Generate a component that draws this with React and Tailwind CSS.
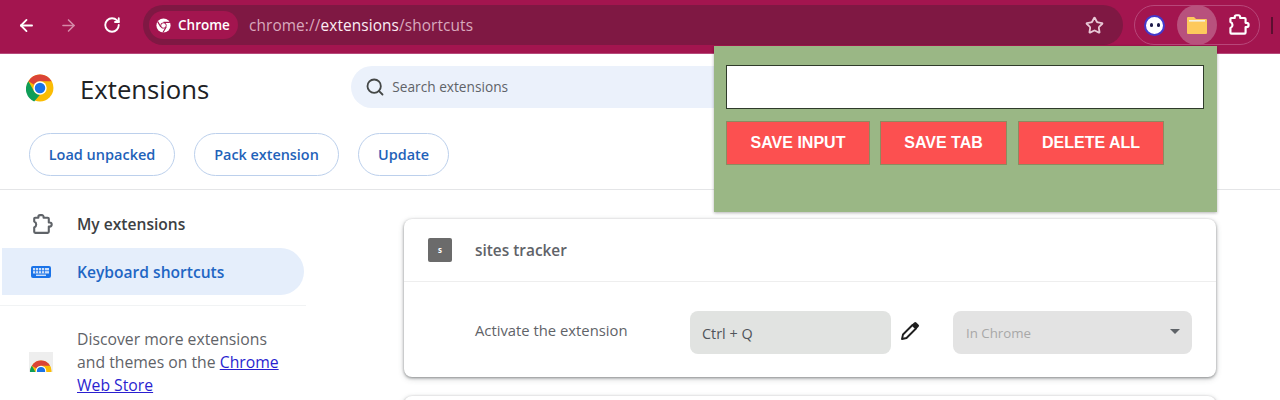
import React from "react";
import { ArrowLeft, ArrowRight, RotateCw, Star, Search } from "lucide-react";

const PuzzlePath = "M5.8 5.5 H9 V4.6 a1.6 1.6 0 0 1 1.6-1.6 h1.8 a1.6 1.6 0 0 1 1.6 1.6 V5.5 H18 a1 1 0 0 1 1 1 V10 h0.8 a2 2 0 0 1 0 4 H19 V19 a1 1 0 0 1-1 1 H6 a1 1 0 0 1-1-1 V14.8 a3 3 0 0 0 0-5.6 V6.3 a0.8 0.8 0 0 1 0.8-0.8 Z";

function Puzzle({ className, sw = 2 }) {
  return (
    <svg viewBox="0 0 24 24" className={className} fill="none" stroke="currentColor" strokeWidth={sw} strokeLinejoin="round">
      <path d={PuzzlePath} />
    </svg>
  );
}

function ChromeLogo({ className }) {
  return (
    <svg viewBox="0 0 48 48" className={className}>
      <circle cx="24" cy="24" r="23" fill="#fbbc04" />
      <path d="M24 1a23 23 0 0 1 19.9 11.5H24a11.5 11.5 0 0 0-10 5.8L4.1 12.5A23 23 0 0 1 24 1z" fill="#db4437" />
      <path d="M4.1 12.5 14 29.8a11.5 11.5 0 0 0 10 5.7L14 47A23 23 0 0 1 4.1 12.5z" fill="#0f9d58" />
      <circle cx="24" cy="24" r="11.5" fill="#fff" />
      <circle cx="24" cy="24" r="9" fill="#1a73e8" />
    </svg>
  );
}

function ChromeMono({ className }) {
  return (
    <svg viewBox="0 0 24 24" className={className} fill="none">
      <circle cx="12" cy="12" r="10" fill="#fff" />
      <circle cx="12" cy="12" r="4.4" fill="#a3154f" />
      <path d="M12 7.6h9M8.2 14.2 3.8 6.5M15.8 14.2 11.2 22" stroke="#a3154f" strokeWidth="1.6" />
      <circle cx="12" cy="12" r="3.2" fill="#fff" />
    </svg>
  );
}

function Toolbar() {
  return (
    <div className="h-[54px] shrink-0 bg-[#a3154f] border-b border-[#b5497a] flex items-center pb-[3px] relative">
      <div className="w-[143px] shrink-0 flex items-center text-white">
        <ArrowLeft className="w-[19px] h-[19px] ml-[17px]" strokeWidth={2.3} />
        <ArrowRight className="w-[19px] h-[19px] ml-[23px] text-[#d58aa8]" strokeWidth={2} />
        <RotateCw className="w-[18px] h-[18px] ml-[25px]" strokeWidth={2.5} />
      </div>
      <div className="w-[980px] shrink-0 h-[40px] rounded-full bg-[#7f1843] flex items-center pl-[6px]">
        <div className="h-[28px] w-[89px] rounded-full bg-[#a3154f] flex items-center pl-[6px] gap-[6px] text-white text-[13.5px] font-semibold">
          <ChromeMono className="w-[17px] h-[17px]" />
          <span>Chrome</span>
        </div>
        <div className="ml-[11px] pt-[1px] text-[15.4px] text-[#d9a9bd] tracking-[0.1px]">
          chrome://<span className="text-[#fbeef3]">extensions</span>/shortcuts
        </div>
        <Star className="w-[19px] h-[19px] ml-auto mr-[19px] text-[#e8c8d6]" strokeWidth={2.3} />
      </div>
      <div className="ml-[11px] w-[126px] h-[40px] rounded-full border border-[#b8477a] flex items-center relative">
        <div className="ml-[9px] w-[21px] h-[21px] rounded-full bg-white border-[2.5px] border-[#4338ca] flex items-center justify-center gap-[4px]">
          <span className="w-[3px] h-[4px] rounded-full bg-[#1e1b4b]"></span>
          <span className="w-[3px] h-[4px] rounded-full bg-[#1e1b4b]"></span>
        </div>
        <div className="ml-[12px] w-[40px] h-[40px] rounded-full bg-[#b8517d] flex items-center justify-center">
          <svg viewBox="0 0 20 18" className="w-[20px] h-[18px]">
            <path d="M0 2a1 1 0 0 1 1-1h6l2 2h10a1 1 0 0 1 1 1v13a1 1 0 0 1-1 1H1a1 1 0 0 1-1-1z" fill="#fdc95c" />
            <path d="M2 4h16v1.6H2z" fill="#f3f1e4" />
          </svg>
        </div>
        <Puzzle className="w-[26px] h-[26px] ml-[8px] text-white" />
      </div>
      <div className="ml-[11px] w-[2px] h-[17px] bg-[#5c0f30]"></div>
    </div>
  );
}

function Popup() {
  return (
    <div className="absolute left-[714px] top-[46px] w-[503px] h-[166px] bg-[#9ab785] shadow-[0_1px_3px_rgba(0,0,0,0.3)] pt-[19px] pl-[12px] pr-[13px] font-['Liberation_Sans',sans-serif]">
      <div className="h-[44px] w-full bg-white border border-[#2f3b2a]"></div>
      <div className="flex mt-[12px]">
        <div className="w-[144px] h-[44px] bg-[#fc5050] border border-[#8d8a60] flex items-center justify-center text-white font-bold text-[16px]">SAVE INPUT</div>
        <div className="w-[127px] h-[44px] ml-[10px] bg-[#fc5050] border border-[#8d8a60] flex items-center justify-center text-white font-bold text-[16px]">SAVE TAB</div>
        <div className="w-[146px] h-[44px] ml-[11px] bg-[#fc5050] border border-[#8d8a60] flex items-center justify-center text-white font-bold text-[16px]">DELETE ALL</div>
      </div>
    </div>
  );
}

function Sidebar() {
  return (
    <div className="w-[306px] shrink-0 pt-[10px] text-[15.6px]">
      <div className="h-[48px] flex items-center pl-[29px] font-semibold text-[#3c4043]">
        <Puzzle className="w-[25px] h-[25px] text-[#5f6368]" />
        <span className="ml-[23px] pt-[2px]">My extensions</span>
      </div>
      <div className="h-[47px] w-[302px] ml-[2px] rounded-r-full bg-[#e5eefb] flex items-center pl-[29px] font-semibold text-[#1f66c4]">
        <svg viewBox="0 0 20 12" className="w-[20px] h-[12px]">
          <rect x="0" y="0" width="20" height="12" rx="2" fill="#1a73e8" />
          <rect x="2" y="2" width="16" height="5.5" fill="#cfe0f8" />
          <path d="M4.5 2v5.5M7.5 2v5.5M10.5 2v5.5M13.5 2v5.5M2 4.7h16" stroke="#1a73e8" strokeWidth="0.8" />
          <rect x="5" y="8.6" width="10" height="1.4" fill="#cfe0f8" />
        </svg>
        <span className="ml-[26px] pt-[2px]">Keyboard shortcuts</span>
      </div>
      <div className="h-px bg-[#f1f3f4] mt-[10px]"></div>
      <div className="flex mt-[22px] pl-[29px]">
        <div className="relative w-[24px] h-[20px] mt-[24px] overflow-hidden bg-[#eeeeee]">
          <ChromeLogo className="absolute left-[1px] top-[8px] w-[22px] h-[22px]" />
        </div>
        <div className="ml-[24px] text-[15.75px] text-[#5f6368] leading-[23px]">
          Discover more extensions<br />and themes on the <span className="text-[#2a1fd0] underline">Chrome</span><br />
          <span className="text-[#2a1fd0] underline">Web Store</span>
        </div>
      </div>
    </div>
  );
}

function Card({ children }) {
  return (
    <div className="w-[812px] h-[158px] rounded-[8px] bg-white shadow-[0_1px_3px_rgba(60,64,67,0.55),0_2px_6px_rgba(60,64,67,0.2)] shrink-0">
      {children}
    </div>
  );
}

export default function App() {
  return (
    <div className="relative w-[1280px] h-[400px] overflow-hidden bg-white flex flex-col font-['Open_Sans','Noto_Sans',sans-serif]">
      <Toolbar />
      <div className="h-[136px] shrink-0 border-b border-[#e4e5e7]">
        <div className="flex items-start h-[79px]">
          <ChromeLogo className="w-[28px] h-[28px] ml-[26px] mt-[20px]" />
          <span className="ml-[26px] mt-[19px] text-[25.7px] font-medium text-[#202124] leading-[34px]">Extensions</span>
          <div className="ml-[142px] mt-[12px] w-[580px] h-[42px] rounded-full bg-[#ebf1fb] flex items-center pl-[14px] text-[#5f6368]">
            <Search className="w-[20px] h-[20px] text-[#444746]" strokeWidth={2.2} />
            <span className="ml-[7px] text-[13.7px] font-medium">Search extensions</span>
          </div>
        </div>
        <div className="flex gap-[19px] pl-[29px]">
          <div className="w-[146px] h-[43px] rounded-full border border-[#bcd0ec] flex items-center justify-center text-[14.5px] font-semibold text-[#1f62b9]">Load unpacked</div>
          <div className="w-[145px] h-[43px] rounded-full border border-[#bcd0ec] flex items-center justify-center text-[14.4px] font-semibold text-[#1f62b9]">Pack extension</div>
          <div className="w-[91px] h-[43px] rounded-full border border-[#bcd0ec] flex items-center justify-center text-[14.4px] font-semibold text-[#1f62b9]">Update</div>
        </div>
      </div>
      <div className="flex flex-1 min-h-0">
        <Sidebar />
        <div className="pl-[98px] pt-[29px] flex flex-col gap-[19px]">
          <Card>
            <div className="h-[63px] border-b border-[#eeeeee] flex items-center pl-[24px]">
              <div className="w-[24px] h-[24px] rounded-[2px] bg-[#6b6b6b] flex items-center justify-center text-white text-[8px] font-bold">s</div>
              <span className="ml-[23px] mt-[2px] text-[15.4px] font-semibold text-[#5f6368]">sites tracker</span>
            </div>
            <div className="flex items-center pt-[29px] pl-[71px]">
              <span className="w-[215px] text-[14.8px] text-[#5f6368] -mt-[5px]">Activate the extension</span>
              <div className="w-[201px] h-[43px] rounded-[8px] bg-[#e1e3e1] flex items-center pl-[12px] pt-[2px] text-[14.4px] text-[#50545a]">Ctrl + Q</div>
              <svg viewBox="0 0 20 20" className="w-[20px] h-[20px] ml-[9px] -mt-[3px]">
                <path d="M2 18 L3 13.5 L12.5 4 L16 7.5 L6.5 17 Z" fill="none" stroke="#1f1f1f" strokeWidth="1.9" strokeLinejoin="round" />
                <path d="M12 3.5 L14.2 1.4 a1.5 1.5 0 0 1 2.1 0 L18.6 3.7 a1.5 1.5 0 0 1 0 2.1 L16.5 8 Z" fill="#1f1f1f" />
              </svg>
              <div className="w-[239px] h-[43px] ml-[33px] rounded-[8px] bg-[#e3e3e3] flex items-center pl-[13px] pr-[12px] pt-[3px] text-[13.3px] text-[#a8a8a8]">
                In Chrome
                <span className="ml-auto -mt-[6px] w-0 h-0 border-x-[5px] border-x-transparent border-t-[5px] border-t-[#5f6368]"></span>
              </div>
            </div>
          </Card>
          <Card />
        </div>
      </div>
      <Popup />
    </div>
  );
}
